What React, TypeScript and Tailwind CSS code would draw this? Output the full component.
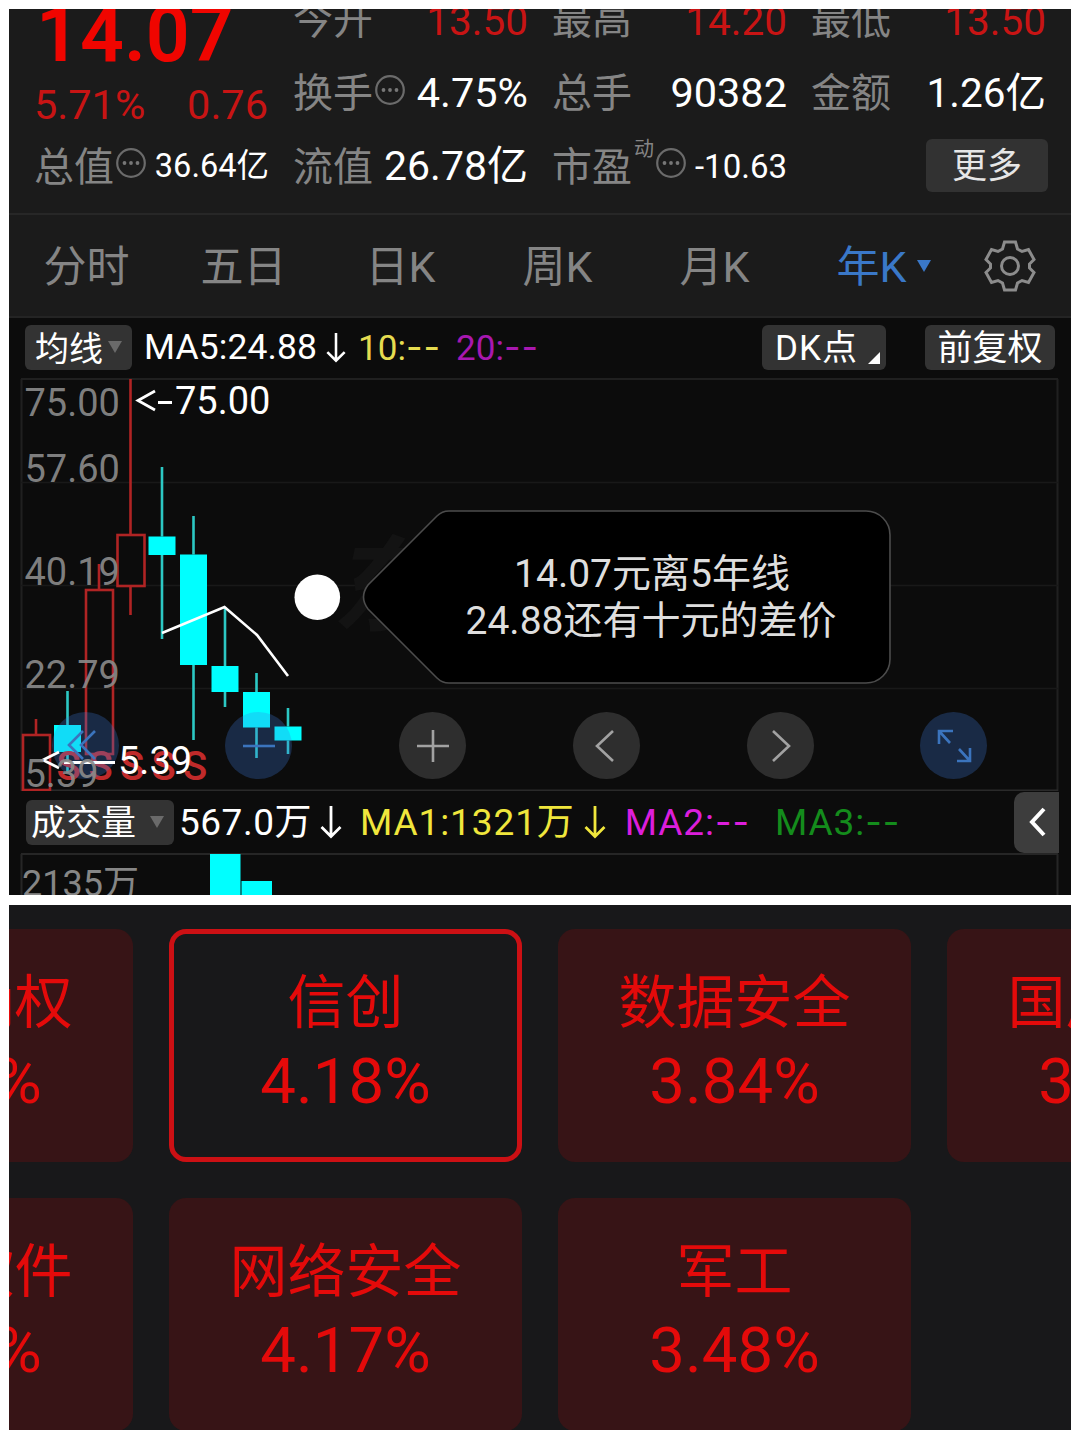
import type { ReactNode } from "react"
import { twMerge } from "tailwind-merge"

const intervals = ["分时", "五日", "日K", "周K", "月K", "年K"]

const priceTicks = [
  { label: "75.00", y: 416 },
  { label: "57.60", y: 482 },
  { label: "40.19", y: 585 },
  { label: "22.79", y: 688 },
  { label: "5.39", y: 787 },
]

type Candle = {
  x: number
  high: number
  top: number
  bottom: number
  low: number
  up?: boolean
}

const candles: Candle[] = [
  { x: 36, high: 719, top: 735, bottom: 790, low: 790, up: true },
  { x: 67.5, high: 691, top: 725, bottom: 752, low: 773 },
  { x: 99, high: 564, top: 590, bottom: 754, low: 754, up: true },
  { x: 130.5, high: 379, top: 535, bottom: 586, low: 615, up: true },
  { x: 162, high: 467, top: 536.5, bottom: 555, low: 639 },
  { x: 193.5, high: 516, top: 554.5, bottom: 665, low: 740 },
  { x: 225, high: 607, top: 666, bottom: 692, low: 707 },
  { x: 256.5, high: 673, top: 692, bottom: 727.5, low: 758 },
  { x: 288, high: 708, top: 726.5, bottom: 740.5, low: 754 },
]

const sectors = [
  { name: "数据确权", change: "4.32%" },
  { name: "信创", change: "4.18%", active: true },
  { name: "数据安全", change: "3.84%" },
  { name: "国产软件", change: "3.79%" },
  { name: "工业软件", change: "4.21%" },
  { name: "网络安全", change: "4.17%" },
  { name: "军工", change: "3.48%" },
]

const MoreDots = () => (
  <svg width="32" height="32" viewBox="0 0 32 32" className="-mt-[9px] ml-px shrink-0">
    <circle cx="16" cy="16" r="13.8" fill="none" stroke="#6b6b6b" strokeWidth="2.2" />
    <circle cx="9.5" cy="16" r="1.9" fill="#777" />
    <circle cx="16" cy="16" r="1.9" fill="#777" />
    <circle cx="22.5" cy="16" r="1.9" fill="#777" />
  </svg>
)

const DownArrow = ({ className = "" }: { className?: string }) => (
  <svg
    width="22"
    height="34"
    viewBox="0 0 22 34"
    fill="none"
    stroke="currentColor"
    strokeWidth="2.8"
    className={twMerge("shrink-0", className)}
  >
    <path d="M11 1V31M1.5 22L11 31.5L20.5 22" />
  </svg>
)

const Caret = ({ className = "" }: { className?: string }) => (
  <svg width="14" height="12" viewBox="0 0 14 12" className={twMerge("shrink-0 fill-[#6a6a6a]", className)}>
    <path d="M0 0H14L7 12Z" />
  </svg>
)

const Dashes = () => <span className="font-['Inter'] text-[36px] tracking-[1px]">--</span>

type CellProps = {
  label: ReactNode
  value: string
  className?: string
}

const Cell = ({ label, value, className = "" }: CellProps) => (
  <div className="flex items-center justify-between whitespace-nowrap">
    <span className="flex items-center pt-[5px] text-[40px] text-[#858585]">{label}</span>
    <span className={twMerge("pt-[3px] text-[41.5px] text-white", className)}>{value}</span>
  </div>
)

const QuoteHeader = () => (
  <header className="flex h-[206px] gap-6 overflow-hidden border-b-2 border-[#272727] pl-[25px]">
    <div className="-mt-[27px] flex w-[235px] shrink-0 flex-col">
      <div className="flex h-[104px] shrink-0 items-center pl-0.5 pt-[3px] text-[77px] font-semibold text-[#f00500]">
        14.07
      </div>
      <div className="flex h-[37px] shrink-0 items-center justify-between pr-px text-[41.5px] text-[#c81414]">
        <span>5.71%</span>
        <span>0.76</span>
      </div>
      <div className="grid h-[84px] shrink-0">
        <Cell label={<>总值<MoreDots /></>} value="36.64亿" className="text-[32.5px]" />
      </div>
    </div>
    <div className="-mt-[27px] grid shrink-0 grid-cols-[235px_235px_235px] grid-rows-[73px_73px_74px] gap-x-6">
      <Cell label="今开" value="13.50" className="pt-[6px] text-[40.5px] text-[#c81414]" />
      <Cell label="最高" value="14.20" className="pt-[6px] text-[40.5px] text-[#c81414]" />
      <Cell label="最低" value="13.50" className="pt-[6px] text-[40.5px] text-[#c81414]" />
      <Cell label={<>换手<MoreDots /></>} value="4.75%" />
      <Cell label="总手" value="90382" />
      <Cell label="金额" value="1.26亿" className="text-[40.5px]" />
      <Cell label="流值" value="26.78亿" className="text-[41px]" />
      <Cell
        label={
          <>
            市盈<span className="-mt-[38px] ml-0.5 text-[20px]">动</span>
            <MoreDots />
          </>
        }
        value="-10.63"
        className="text-[33px]"
      />
      <div className="flex items-center justify-end">
        <button className="-mr-0.5 h-[53px] w-[122px] rounded-md bg-[#323232] pt-0.5 text-[35px] text-[#e6e6e6]">
          更多
        </button>
      </div>
    </div>
  </header>
)

const IntervalTabs = () => (
  <nav className="flex h-[103px] items-center border-b-2 border-[#242424] text-[43px] text-[#858585]">
    {intervals.map((name) => (
      <button
        key={name}
        className={twMerge("relative w-[157px] pr-0.5 pt-[3px]", name === "年K" && "text-[#3a78c8]")}
      >
        {name}
        {name === "年K" && <Caret className="absolute right-[20px] top-[17px] fill-[#3a78c8]" />}
      </button>
    ))}
    <svg
      width="52"
      height="52"
      viewBox="0 0 52 52"
      fill="none"
      stroke="#8c8c8c"
      strokeWidth="3"
      className="ml-[33px]"
    >
      <path d="M20.5 2H31.5L33.5 9L38 11.5L44.5 9.5L50 19.5L45.5 24V28L50 32.5L44.5 42.5L38 40.5L33.5 43L31.5 50H20.5L18.5 43L14 40.5L7.5 42.5L2 32.5L6.5 28V24L2 19.5L7.5 9.5L14 11.5L18.5 9Z" />
      <circle cx="26" cy="26" r="8.5" />
    </svg>
  </nav>
)

const IndicatorBar = () => (
  <div className="flex h-[60px] shrink-0 items-center whitespace-nowrap pb-0.5 pl-4 pr-[16px] text-[35px] text-white">
    <button className="flex h-[45px] w-[107px] items-center rounded-md bg-[#333] pl-[10px] text-[34px]">
      <span className="pt-[3px]">均线</span>
      <Caret className="ml-[5px]" />
    </button>
    <span className="ml-[12px] pt-0.5 text-[35.5px] tracking-[0.1px]">MA5:24.88</span>
    <DownArrow className="ml-[8px] h-[31px]" />
    <span className="ml-[11px] text-[#e6dc50]">
      10:<Dashes />
    </span>
    <span className="ml-[15px] text-[#a818b0]">
      20:<Dashes />
    </span>
    <button className="relative ml-auto h-[45px] w-[124px] rounded-md bg-[#333] pl-[13px] text-left">
      <span className="block pt-0.5 tracking-[1px]">DK点</span>
      <svg width="12" height="12" viewBox="0 0 12 12" fill="#fff" className="absolute bottom-[6px] right-[6px]">
        <path d="M12 0V12H0Z" />
      </svg>
    </button>
    <button className="ml-[39px] h-[45px] w-[130px] rounded-md bg-[#333] pt-0.5">前复权</button>
  </div>
)

const CandleShape = ({ x, high, top, bottom, low, up }: Candle) => {
  const color = up ? "#b02424" : "#2cc8c4"
  return (
    <g stroke={color} strokeWidth="2.6">
      <path d={`M${x} ${high}V${top}M${x} ${bottom}V${low}`} />
      {up ? (
        <rect x={x - 13} y={top} width="27" height={bottom - top} fill="none" />
      ) : (
        <rect x={x - 13.5} y={top} width="27" height={bottom - top} fill="#00ffff" stroke="none" />
      )}
    </g>
  )
}

const ChartButton = ({ blue, children }: { blue?: boolean; children: ReactNode }) => (
  <button
    className={twMerge(
      "flex size-[67px] items-center justify-center rounded-full bg-white/14 text-[#a2a2a2]",
      blue && "bg-[#3e7de1]/27 text-[#3b74bd]",
    )}
  >
    <svg width="40" height="40" viewBox="0 0 40 40" fill="none" stroke="currentColor" strokeWidth="2.6">
      {children}
    </svg>
  </button>
)

const PriceChart = () => (
  <section className="relative h-[413px] shrink-0">
    <svg width="1062" height="413" viewBox="9 378 1062 413">
      <g stroke="#191919" strokeWidth="2">
        <path d="M21 379H1058M21.5 379V791M1057.5 379V791" stroke="#202020" />
        <path d="M21 482.5H1058M21 585.5H1058M21 688.5H1058" strokeWidth="1.5" />
        <path d="M21 790.5H1058" stroke="#2a2a2a" />
      </g>
      {/* watermark behind the candles */}
      <text x="334" y="623" fontSize="104" fontWeight="700" fill="#131313" transform="skewX(-12) translate(130 0)">
        东
      </text>
      {candles.map((candle) => (
        <CandleShape key={candle.x} {...candle} />
      ))}
      <path d="M162 633L224.5 607L257 635L288 676" fill="none" stroke="#fff" strokeWidth="2.6" />
      <g fill="#c02a2a" fontSize="40" fontWeight="500">
        {[68.5, 100.5, 132, 163.5, 195].map((x) => (
          <text key={x} x={x} y="780" textAnchor="middle">
            S
          </text>
        ))}
      </g>
    </svg>

    <div className="absolute left-[42.5px] top-[334px] flex w-[936px] justify-between">
      <ChartButton blue>
        <path d="M20 6L6 20L20 34M32 6L18 20L32 34" transform="translate(-2 -1)" />
      </ChartButton>
      <ChartButton blue>
        <path d="M4 20H36" />
      </ChartButton>
      <ChartButton>
        <path d="M4 20H36M20 4V36" />
      </ChartButton>
      <ChartButton>
        <path d="M27 5L11 20L27 35" />
      </ChartButton>
      <ChartButton>
        <path d="M13 5L29 20L13 35" />
      </ChartButton>
      <ChartButton blue>
        <path d="M5 18V5H19M5 5L16 17M36 22V35H23M36 35L25 23" />
      </ChartButton>
    </div>

    <svg width="1062" height="413" viewBox="9 378 1062 413" className="pointer-events-none absolute left-0 top-0">
      <g fill="#fff" fontSize="38">
        <path d="M155 391L138 400.5L155 410M158 402.5H172" fill="none" stroke="#fff" strokeWidth="2.8" />
        <text x="175" y="414">
          75.00
        </text>
        <path d="M59 752L43 760L59 768M64 762.5H115" fill="none" stroke="#fff" strokeWidth="2.8" />
        <text x="118" y="774">
          5.39
        </text>
      </g>
      <g fill="#8a8a8a" fillOpacity=".92" fontSize="38">
        {priceTicks.map(({ label, y }) => (
          <text key={label} x="24.5" y={y}>
            {label}
          </text>
        ))}
      </g>
      <circle cx="317.3" cy="597.3" r="22.8" fill="#fff" />
      <path
        d="M449 511H866A24 24 0 0 1 890 535V659A24 24 0 0 1 866 683H449Q442 683 437 678L368 609Q359 597 368 585L437 516Q442 511 449 511Z"
        stroke="#4c4c4c"
        strokeWidth="1.6"
      />
      <g fill="#dedede" fontSize="39" textAnchor="middle">
        <text x="652" y="587">
          14.07元离5年线
        </text>
        <text x="651" y="633.5">
          24.88还有十元的差价
        </text>
      </g>
    </svg>
  </section>
)

const VolumeBar = () => (
  <div className="flex h-[62px] shrink-0 items-center whitespace-nowrap pl-[17px] text-[37px] tracking-[0.9px] text-white">
    <button className="flex h-[45px] w-[148px] items-center rounded-md bg-[#333] pl-[5px] text-[35px] tracking-normal">
      <span className="pt-[3px]">成交量</span>
      <Caret className="ml-[14px]" />
    </button>
    <span className="ml-[5px] pt-px tracking-[0.5px]">567.0万</span>
    <DownArrow className="ml-[8px]" />
    <span className="ml-[18px] pt-px text-[#f0e63c]">MA1:1321万</span>
    <DownArrow className="ml-[9px] text-[#f0e63c]" />
    <span className="ml-[19px] pt-px text-[#dc1edc]">
      MA2:<Dashes />
    </span>
    <span className="ml-[25px] pt-px text-[#148c1c]">
      MA3:<Dashes />
    </span>
    <button className="ml-auto mr-3 flex h-[61px] w-[45px] items-center justify-center rounded-l-[10px] bg-[#3d3d3d]">
      <svg width="18" height="30" viewBox="0 0 18 30" fill="none" stroke="#fff" strokeWidth="4">
        <path d="M16 2L4 15L16 28" />
      </svg>
    </button>
  </div>
)

const VolumeChart = () => (
  <svg width="1062" height="42" viewBox="9 853 1062 42" className="shrink-0">
    <path d="M21 854H1058M21.5 854V895M1057.5 854V895" stroke="#262626" strokeWidth="2" />
    <path d="M210 854H240.5V895H210ZM241.5 881H272V895H241.5Z" fill="#00ffff" />
    <text x="22" y="896" fontSize="36" fill="#868686">
      2135万
    </text>
  </svg>
)

const SectorCard = ({ name, change, active }: (typeof sectors)[number]) => (
  <div
    className={twMerge(
      "flex h-[233px] flex-col items-center rounded-[17px] border-[5px] border-transparent bg-[#371416] pt-[39px] text-[#e40a0a]",
      active && "border-[#cc1014] bg-transparent",
    )}
  >
    <span className="whitespace-nowrap text-[58px] leading-[60px]">{name}</span>
    <span className="mt-[17px] text-[63.5px] leading-[64px]">{change}</span>
  </div>
)

const App = () => (
  <main
    lang="zh-CN"
    className="flex h-[1440px] w-[1080px] flex-col gap-[10px] overflow-hidden bg-white p-[9px] font-['Roboto','Noto_Sans_CJK_SC',sans-serif] leading-none"
  >
    <section className="flex h-[886px] shrink-0 flex-col overflow-hidden bg-[#0c0c0c]">
      <div className="shrink-0 bg-[#1b1b1b]">
        <QuoteHeader />
        <IntervalTabs />
      </div>
      <IndicatorBar />
      <PriceChart />
      <VolumeBar />
      <VolumeChart />
    </section>
    <section className="h-[525px] shrink-0 overflow-hidden bg-[#18181a] pt-6">
      <div className="-ml-[229px] grid w-[1520px] grid-cols-[353px_353px_353px_353px] gap-9">
        {sectors.map((sector) => (
          <SectorCard key={sector.name} {...sector} />
        ))}
      </div>
    </section>
  </main>
)

export default App
